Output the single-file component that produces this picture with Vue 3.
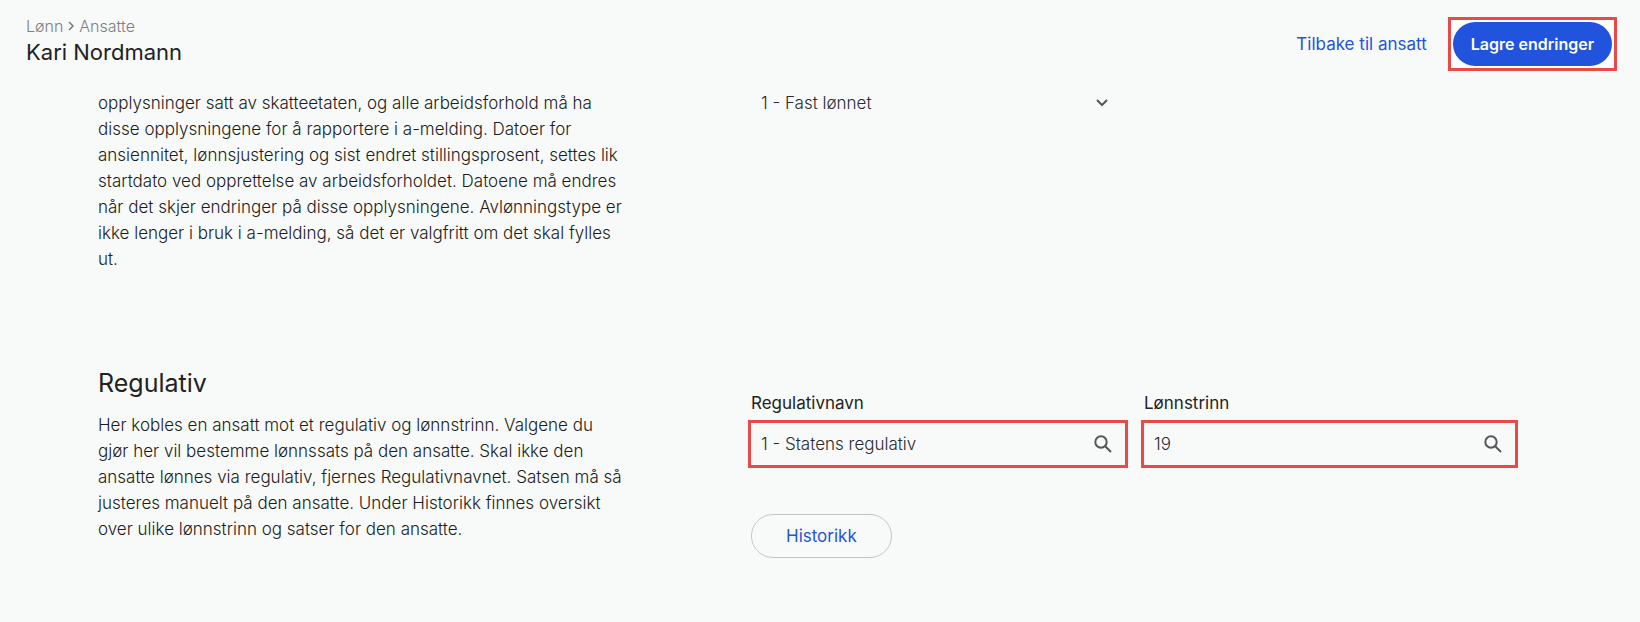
<template>
  <div class="page">
    <header class="topbar">
      <div class="heading">
        <nav class="breadcrumb" aria-label="Brødsmulesti">
          <a href="#lonn">Lønn</a>
          <svg class="crumb-arrow" viewBox="0 0 8 10" aria-hidden="true">
            <path d="M2 1l4 4-4 4" />
          </svg>
          <a href="#ansatte">Ansatte</a>
        </nav>
        <h1 class="name">Kari Nordmann</h1>
      </div>

      <div class="actions">
        <a href="#ansatt" class="back-link">Tilbake til ansatt</a>
        <div class="save-frame">
          <button type="button" class="btn btn-primary">Lagre endringer</button>
        </div>
      </div>
    </header>

    <main class="content">
      <section class="section">
        <p class="description">
          opplysninger satt av skatteetaten, og alle arbeidsforhold må ha
          disse opplysningene for å rapportere i a-melding. Datoer for
          ansiennitet, lønnsjustering og sist endret stillingsprosent, settes lik
          startdato ved opprettelse av arbeidsforholdet. Datoene må endres
          når det skjer endringer på disse opplysningene. Avlønningstype er
          ikke lenger i bruk i a-melding, så det er valgfritt om det skal fylles
          ut.
        </p>
        <div class="fields">
          <div class="select-box">
            <select v-model="wageType" class="control" aria-label="Avlønningstype">
              <option v-for="type in wageTypes" :key="type" :value="type">{{ type }}</option>
            </select>
            <svg class="chevron" viewBox="0 0 12 8" aria-hidden="true">
              <path d="M1 1l5 5 5-5" />
            </svg>
          </div>
        </div>
      </section>

      <section class="section">
        <div>
          <h2 class="title">Regulativ</h2>
          <p class="description">
            Her kobles en ansatt mot et regulativ og lønnstrinn. Valgene du
            gjør her vil bestemme lønnssats på den ansatte. Skal ikke den
            ansatte lønnes via regulativ, fjernes Regulativnavnet. Satsen må så
            justeres manuelt på den ansatte. Under Historikk finnes oversikt
            over ulike lønnstrinn og satser for den ansatte.
          </p>
        </div>
        <div class="form">
          <div class="fields">
            <div v-for="field in fields" :key="field.id" class="field">
              <label :for="field.id" class="label">{{ field.label }}</label>
              <div class="search-box">
                <input :id="field.id" v-model="field.value" type="text" class="control" />
                <button type="button" class="search-btn" :aria-label="`Søk ${field.label}`">
                  <svg class="search-icon" viewBox="0 0 18 18" aria-hidden="true">
                    <circle cx="7" cy="7" r="5.7" />
                    <path d="M11.2 11.2l5.8 5.8" />
                  </svg>
                </button>
              </div>
            </div>
          </div>
          <button type="button" class="btn btn-outline">Historikk</button>
        </div>
      </section>
    </main>
  </div>
</template>

<script setup>
import { ref } from 'vue'

const wageTypes = ['1 - Fast lønnet', '2 - Timelønnet', '3 - Provisjonslønnet']
const wageType = ref(wageTypes[0])

const fields = ref([
  { id: 'regulativnavn', label: 'Regulativnavn', value: '1 - Statens regulativ' },
  { id: 'lonnstrinn', label: 'Lønnstrinn', value: '19' }
])
</script>

<style>
body {
  margin: 0;
  background: #f8faf9;
}
</style>

<style scoped>
.page {
  min-height: 100vh;
  background: #f8faf9;
  color: #1c1c20;
  font-family: Inter, "Liberation Sans", sans-serif;
  font-size: 17px;
  font-weight: 300;
  line-height: 26px;
}

.topbar {
  display: flex;
  justify-content: space-between;
  align-items: flex-start;
  padding: 17px 23px 0 26px;
}

.breadcrumb {
  display: flex;
  align-items: center;
  gap: 4px;
  font-size: 16px;
  line-height: 18px;
}

.breadcrumb a {
  color: #7d7f84;
  text-decoration: none;
}

.crumb-arrow {
  width: 8px;
  height: 10px;
  fill: none;
  stroke: #77797e;
  stroke-width: 1.5;
}

.name {
  margin: 3px 0 0;
  font-size: 22px;
  font-weight: 400;
  line-height: 28px;
  color: #222;
}

.actions {
  display: flex;
  align-items: center;
  gap: 21px;
}

.back-link {
  color: #2253dc;
  font-weight: 400;
  text-decoration: none;
}

.save-frame {
  padding: 2px;
  border: 3px solid #ea4a46;
  background: #fff;
}

.btn {
  display: block;
  box-sizing: border-box;
  height: 44px;
  border-radius: 22px;
  font-family: inherit;
  font-size: 17px;
  line-height: 26px;
  cursor: pointer;
}

.btn-primary {
  padding: 0 18px;
  border: none;
  background: #2253dc;
  color: #fff;
  font-size: 16px;
  font-weight: 600;
}

.btn-outline {
  margin: 46px 0 0 3px;
  padding: 0 34px;
  border: 1px solid #c6c4ca;
  background: transparent;
  color: #2253dc;
  font-weight: 400;
}

.content {
  display: flex;
  flex-direction: column;
  gap: 95px;
  padding: 19px 122px 64px 98px;
}

.section {
  display: grid;
  grid-template-columns: 530fr 770fr;
  column-gap: 120px;
  align-items: start;
}

.description {
  margin: 0;
}

.title {
  margin: 0 0 13px;
  font-size: 25px;
  font-weight: 400;
  line-height: 32px;
  color: #222;
}

.form {
  padding-top: 23px;
}

.fields {
  display: grid;
  grid-template-columns: 380fr 377fr;
  column-gap: 13px;
}

.label {
  display: block;
  margin: 0 0 4px 3px;
  font-weight: 400;
  color: #222;
}

.search-box {
  display: flex;
  align-items: center;
  border: 3px solid #ea4a46;
}

.control {
  flex: 1;
  min-width: 0;
  height: 42px;
  box-sizing: border-box;
  padding: 0 10px;
  border: none;
  background: transparent;
  color: #2a2a30;
  font: inherit;
  appearance: none;
}

.search-btn {
  display: flex;
  padding: 0 13px 0 0;
  border: none;
  background: transparent;
  cursor: pointer;
}

.search-icon {
  width: 18px;
  height: 18px;
  fill: none;
  stroke: #55575c;
  stroke-width: 2;
}

.select-box {
  display: grid;
  align-items: center;
  padding-left: 3px;
}

.select-box .control {
  grid-area: 1 / 1;
  height: 26px;
}

.chevron {
  grid-area: 1 / 1;
  justify-self: end;
  width: 12px;
  height: 8px;
  margin-right: 20px;
  fill: none;
  stroke: #55575c;
  stroke-width: 2;
  pointer-events: none;
}
</style>
